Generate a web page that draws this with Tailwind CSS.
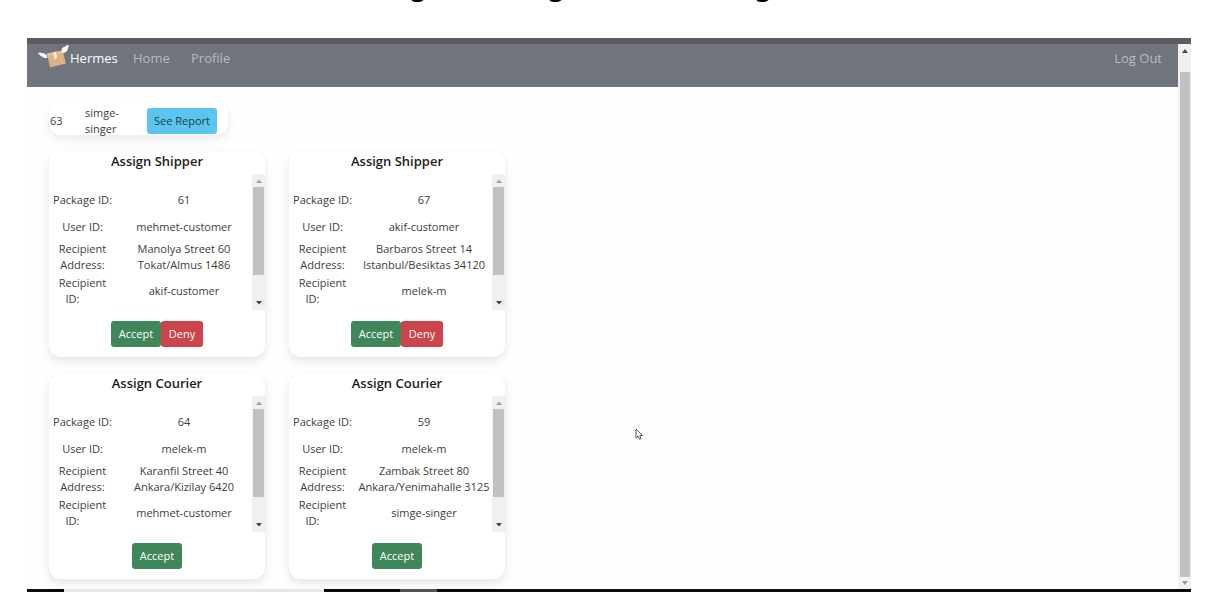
<!DOCTYPE html>
<html lang="en">
<head>
<meta charset="utf-8">
<title>Hermes</title>
<script src="https://cdn.jsdelivr.net/npm/@tailwindcss/browser@4"></script>
</head>
<body class="min-h-screen bg-white pr-[17px] pl-[27px] font-['Open_Sans','Noto_Sans',sans-serif] text-[11px] leading-4 text-[#3c3c3e]">
<!-- tail of the caption above the frame -->
<div class="flex h-[38px] overflow-hidden pl-[382px] font-['Noto_Sans',sans-serif] text-[30px] leading-1 text-black" aria-hidden="true">
  <span class="-mt-[18px] w-[138px]">g</span><span class="-mt-[18px] w-[207px]">g</span><span class="-mt-[18px]">g</span>
</div>
<div class="border-t-6 border-[#5c5b5d]">
  <div class="flex bg-[#fefefe]">
    <div class="min-w-0 grow">
      <nav class="flex h-[43px] items-start bg-[#70747d] pt-1 pr-4 pl-[10px] text-[13px] leading-5 text-[#b9bbc0]">
        <a href="#" class="flex w-[79px] items-start gap-px text-white">
          <svg class="-mt-1 h-6 w-8 shrink-0" viewBox="0 0 32 24" aria-hidden="true">
            <path d="M10 9.500 25.500 6.500 29 19.500 13 23.500Z" fill="#dcb184"/>
            <path d="M10 9.500 25.500 6.500 26.300 9 10.700 12.300Z" fill="#e4bf96"/>
            <path d="M16.300 8.200 18.600 7.800 20 13 18.600 15.300 17.200 14Z" fill="#f8f4ef"/>
            <path d="M1 9C3 8.300 7 8.600 9.500 11L10.500 14C7.500 14.500 5.800 13.300 5.300 12.400 3.300 12.500 3 11.200 3.200 10.700 1.800 10.600 1 9.800 1 9Z" fill="#fff"/>
            <path d="M31.500 1C31.800 4 30.500 7.500 26.500 9.300L24.500 6.700C24.700 3.700 26.800 2.800 28 2.800 29.200 1.300 30.700 1 31.500 1Z" fill="#fff"/>
          </svg>
          <span>Hermes</span>
        </a>
        <a href="#" class="ml-[17px] w-[37px]">Home</a>
        <a href="#" class="ml-[21px]">Profile</a>
        <a href="#" class="ml-auto">Log Out</a>
      </nav>
      <main class="px-[22px] pt-4 pb-[10px]">
        <section class="flex h-8 w-[179px] items-center rounded-[12px] bg-white pt-[3px] shadow-[0_4px_10px_#00000014]">
          <span class="w-9 pl-px">63</span>
          <span class="w-[62px]">simge-<br>singer</span>
          <button class="h-[26px] w-[70px] rounded-[3px] bg-[#5bc5ee] text-[#1d3d4b]">See Report</button>
        </section>
        <div id="cards" class="mt-[17px] grid grid-cols-[216px_216px] gap-x-6 gap-y-[17px]"></div>
      </main>
    </div>
    <div class="flex w-[13px] shrink-0 flex-col items-center bg-[#f0f0f2]" aria-hidden="true">
      <svg class="h-[28px] w-2 pb-[14px]" viewBox="0 0 8 14"><path d="M1 9 4 5 7 9Z" fill="#444"/></svg>
      <div class="w-[10px] grow bg-[#c1c1c2]"></div>
      <svg class="h-3 w-2" viewBox="0 0 8 12"><path d="M1 4 4 8 7 4Z" fill="#999"/></svg>
    </div>
  </div>
  <div class="flex h-[3px] bg-[#0c0c0e]" aria-hidden="true"><div class="ml-[37px] w-[260px] bg-[#e6e6e7]"></div><div class="ml-[76px] w-[37px] bg-[#555]"></div></div>
</div>
<svg class="absolute top-[428px] left-[635px] h-3 w-2" viewBox="0 0 8 12" aria-hidden="true"><path d="M1 1V10L3 8.200 4.500 11.300 6 10.600 4.800 7.500H7.500Z" fill="#fff" stroke="#555" stroke-width="1"/></svg>

<template id="card">
  <section class="flex h-[205px] flex-col rounded-[12px] bg-white shadow-[0_4px_10px_#0000001a]">
    <h2 class="h-[22px] text-center text-[13px] leading-[19px] font-semibold text-[#1c1c1e]"></h2>
    <div class="flex h-[136px]">
      <div class="min-w-0 grow pt-3">
        <table class="w-full table-fixed text-center">
          <tbody>
            <tr class="h-[27px]"><th class="w-[67px] p-0 font-normal whitespace-nowrap" scope="row">Package ID:</th><td class="p-0"></td></tr>
            <tr class="h-[27px]"><th class="p-0 font-normal" scope="row">User ID:</th><td class="p-0"></td></tr>
            <tr class="h-[34px]"><th class="p-0 font-normal" scope="row">Recipient<br>Address:</th><td class="p-0 whitespace-pre"></td></tr>
            <tr class="h-[34px]"><th class="p-0 font-normal" scope="row">Recipient<br><span class="pr-5">ID:</span></th><td class="p-0"></td></tr>
          </tbody>
        </table>
      </div>
      <div class="flex w-[13px] shrink-0 flex-col items-center bg-[#f0f0f2]" aria-hidden="true">
        <svg class="h-[13px] w-2" viewBox="0 0 8 13"><path d="M1 9 4 5.500 7 9Z" fill="#a0a0a2"/></svg>
        <div class="h-[88px] w-[11px] bg-[#c1c1c2]"></div>
        <svg class="mt-auto h-[13px] w-2" viewBox="0 0 8 13"><path d="M1 4 4 7.500 7 4Z" fill="#444"/></svg>
      </div>
    </div>
    <div class="mt-[11px] flex justify-center text-white">
      <button class="h-[26px] w-[50px] rounded-[3px] bg-[#40865b]">Accept</button>
      <button class="deny h-[26px] w-[42px] rounded-[3px] bg-[#cc444c]">Deny</button>
    </div>
  </section>
</template>
<script>
const cards = [
  ["Assign Shipper", "61", "mehmet-customer", "Manolya Street 60\nTokat/Almus 1486", "akif-customer"],
  ["Assign Shipper", "67", "akif-customer", "Barbaros Street 14\nIstanbul/Besiktas 34120", "melek-m"],
  ["Assign Courier", "64", "melek-m", "Karanfil Street 40\nAnkara/Kizilay 6420", "mehmet-customer"],
  ["Assign Courier", "59", "melek-m", "Zambak Street 80\nAnkara/Yenimahalle 3125", "simge-singer"]
];
for (const [title, ...values] of cards) {
  const card = document.getElementById("card").content.cloneNode(true);
  card.querySelector("h2").textContent = title;
  card.querySelectorAll("td").forEach((cell, i) => cell.textContent = values[i]);
  if (title === "Assign Courier") card.querySelector(".deny").remove();
  document.getElementById("cards").append(card);
}
</script>
</body>
</html>
